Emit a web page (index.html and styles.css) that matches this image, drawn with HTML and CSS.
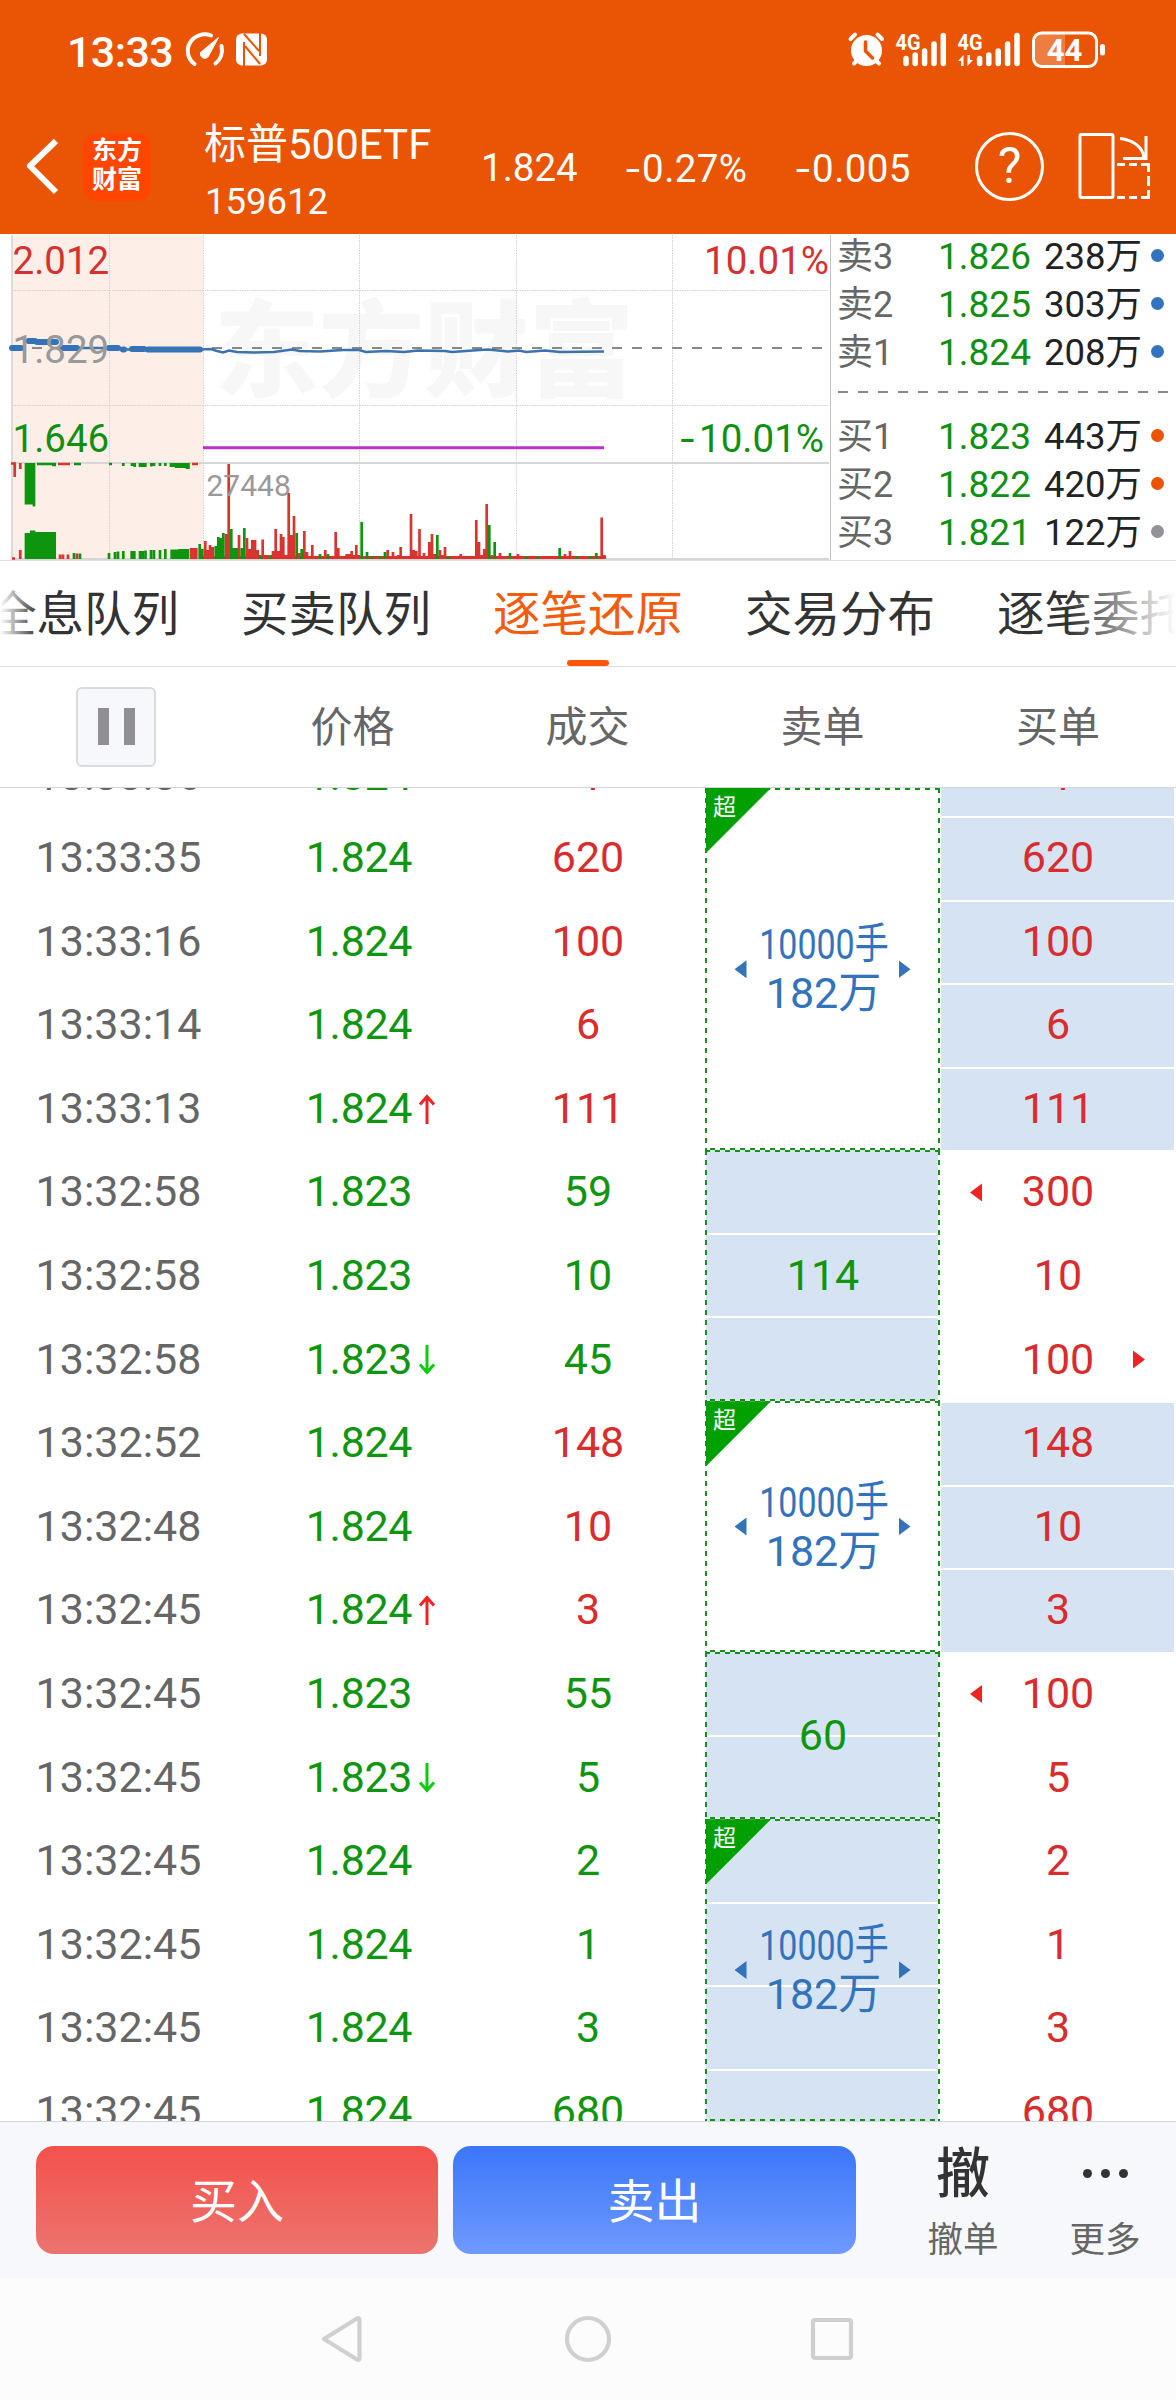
FILE: index.html
```html
<!DOCTYPE html>
<html lang="zh-CN">
<head>
<meta charset="utf-8">
<title>标普500ETF 159612</title>
<link rel="stylesheet" href="styles.css">
</head>
<body>
<header class="top">
  <div class="status">
    <span class="clock">13:33</span>
    <svg class="status-left" width="84" height="36" viewBox="184 31 84 36" fill="none" stroke="#fff" stroke-width="4" stroke-linecap="round">
      <path d="M194.500 64A17 16.500 0 0 1 211 35.500M221.500 46A17 17 0 0 1 215.500 63.500"/>
      <path d="M200.500 52.500L218.500 37.500L208 57A4.500 4.500 0 0 1 200.500 52.500Z" fill="#fff" stroke-width="1"/>
      <rect x="236" y="33.500" width="31" height="32" rx="6" fill="#fff" stroke="none"/>
      <path d="M244 42V66M244 34L259 51M245 46L260 64M260 33V56" stroke="#e95504" stroke-width="2" stroke-linecap="butt"/>
    </svg>
    <svg class="status-right" width="260" height="40" viewBox="847 30 260 40" fill="#fff">
      <circle cx="866.500" cy="50.500" r="15.500"/>
      <path d="M850.500 39L855 34.500M882 39L877.500 34.500M854 63.500L858 59.500M879 63.500L875 59.500" stroke="#fff" stroke-width="4" stroke-linecap="round"/>
      <path d="M865.500 42V51L872.500 58" fill="none" stroke="#e95504" stroke-width="3.500" stroke-linecap="round" stroke-linejoin="round"/>
      <text class="net" x="895.500" y="49.500" textLength="25" lengthAdjust="spacingAndGlyphs">4G</text>
      <text class="net" x="957.500" y="49.500" textLength="25" lengthAdjust="spacingAndGlyphs">4G</text>
      <g stroke="#fff" stroke-width="5.500" stroke-linecap="round">
        <path d="M906 58.500V63.500M915.200 55V63.500M924.600 51V63.500M934 44V63.500M943.300 35.500V63.500"/>
        <path d="M979.600 58.500V63.500M988.800 55V63.500M998.200 51V63.500M1007.600 44V63.500M1017 35.500V63.500"/>
      </g>
      <path d="M958 61L963.500 55V66H961V61ZM973 60L967.500 66V55H970V60Z"/>
      <path d="M1041 33H1065V66H1041A7 7 0 0 1 1034 59V40A7 7 0 0 1 1041 33Z" opacity=".24"/>
      <rect x="1033.500" y="33" width="63" height="33.500" rx="8" fill="none" stroke="#fff" stroke-width="3"/>
      <rect x="1100" y="44" width="5" height="11.500" rx="2.500"/>
      <text class="battery" x="1064.500" y="61" text-anchor="middle">44</text>
    </svg>
  </div>
  <div class="quote">
    <svg class="back" width="36" height="60" viewBox="0 0 36 60" fill="none" stroke="#fff" stroke-width="6" stroke-linejoin="round"><path d="M32 5L6 30L32 56"/></svg>
    <div class="logo"><span>东方</span><span>财富</span></div>
    <div class="name"><span>标普500ETF</span><small>159612</small></div>
    <span class="num last">1.824</span>
    <span class="num pct"><i>-</i>0.27%</span>
    <span class="num diff"><i>-</i>0.005</span>
    <div class="help">?</div>
    <svg class="rotate" width="76" height="70" viewBox="1077 131 76 70" fill="none" stroke="#fff" stroke-width="3">
      <rect x="1080" y="134.500" width="33" height="63" rx="1.500"/>
      <path d="M1120 138.500C1133 140 1143 147 1144 158M1146 136V158.500H1123"/>
      <path d="M1117 164.500H1125M1129 164.500H1137M1141 164.500H1148.500V172M1148.500 176V186M1148.500 190V197.500H1141M1137 197.500H1129M1125 197.500H1117"/>
    </svg>
  </div>
</header>

<section class="market">
  <svg class="chart" width="832" height="326" viewBox="0 234 832 326" fill="none">
    <rect x="12" y="235" width="191" height="324" fill="#fdeee7"/>
    <text class="mark" x="214" y="388">东方财富</text>
    <path d="M109.500 235V559M203.500 235V559M359.500 235V559M516.500 235V559M672.500 235V559M12 290.500H828M12 405.500H828" stroke="#d2d2d2" stroke-dasharray="1.500 1"/>
    <path d="M12 235V560" stroke="#dcdcdc" stroke-width="2"/>
    <path d="M830.500 235V560" stroke="#c4c4c4"/>
    <path d="M12 463H829M12 559H829" stroke="#d6d6d6" stroke-width="2"/>
    <path d="M32 348H822" stroke="#888" stroke-width="2" stroke-dasharray="10 10"/>
    <path d="M12 348H21M28.500 341H35M37 342H56M62 348H77M109 348H118M123 349.500H124M132 349H144M148 349.500H200" stroke="#3273bc" stroke-width="6" stroke-linecap="round"/>
    <path d="M77 348H109M118 348L124 349.500H200L211 349L217 351L223 352.500L229 350.500L237 352L254 352.500L274 352L281 351L292 349.500L300 351L320 351.500L343 350H359L366 352L386 351L404 352L418 350.500L445 351L452 352L480 350L488 349.500L508 351.500L519 350.500L526 352L545 350.500L560 352L604 351.500" stroke="#3b73ad" stroke-width="2.500"/>
    <path d="M203 447.700H604" stroke="#bb32c8" stroke-width="3"/>
    <g stroke-width="2.700">
      <path stroke="#d93430" d="M11 463.500H16M14.700 463V477M20.300 463V469M58 464H70M192 464H198M20.300 559V550M12 558.500H15M60 559V554.500M63 559V554.500M68 559V554.500M77 559V553.500M191 559V548M193.700 559V548M196.300 559V548
      M205.300 559V541M207.800 559V550M210 559V545M212.700 559V547M226 559V534M228.700 559V464M239 559V535M247 559V538M249.700 559V549M252.300 559V540M255 559V540M257.700 559V550M262.700 559V539.500M265.300 559V555M268 559V555M273 559V551M275.700 559V529M278.300 559V551M281 559V534M283.300 559V537M286 559V555M288.700 559V493M291.300 559V535M294 559V516M299.300 559V553M304.300 559V531M307 559V552M312.300 559V545M325.300 559V550M335.700 559V532M338.300 559V548M346.700 559V554M349.300 559V554M351.700 559V551M354.300 559V555M356.300 559V545M359 559V555M387.700 559V550M393 559V552M398.300 559V555M400.700 559V547M411 559V514M413.700 559V550M416.300 559V551M419.500 559V529M424 559V553M429.300 559V542M432 559V534M434.700 559V554M440 559V550M442.700 559V555M445 559V547M460.700 559V554M476.300 559V520M479 559V542M481.700 559V555M484.300 559V549M486.700 559V504M492 559V555M500 559V553M518 559V554M565 559V554M570 559V551M601.700 559V517.500M604.300 559V555"/>
      <path d="M203 557.500H606" stroke="#dd302c" stroke-width="3"/>
      <path stroke="#0f9410" d="M26 463V504.500M28.700 463V504.500M31.300 463V504.500M34 463V506.500M37 464H56M52 465H56M74 464H81M109 464H112M123.300 463V466M132 463V466M134.700 463V467M140 463V467M142.700 463V467M145.300 463V467M151.300 463V466.500M154 463V466M160 463V466M165.300 463V466M171 463V467M173.700 463V467M176.300 463V468M179 463V468M181.700 463V468M184.300 463V468M187 463V469M188.500 463V469
      M26 559V533M28.700 559V533M31.300 559V530.500M34 559V530.500M36.700 559V532M39.300 559V532M42 559V532M44.700 559V532M47.300 559V532M50 559V532M52.700 559V532M54.700 559V532M74 559V553M80 559V553.500M109 559V553M115 559V552M118 559V551.500M123.300 559V551M131.700 559V551M134.300 559V551M140 559V551M142.700 559V551M145.500 559V550.500M151 559V550M154 559V550M160 559V550M165.300 559V549M171.700 559V549.500M174.300 559V549.500M177 559V549.500M179.700 559V549M182.300 559V549M185 559V549M187.700 559V549M199.700 559V544M202.300 559V549M215.700 559V546M218.300 559V537M220.700 559V538M223.300 559V533M231.300 559V529M234 559V548M236.700 559V548M241.700 559V548M244.300 559V528M260.300 559V555M270.700 559V555M296.700 559V533M301.700 559V549M320 559V554M328 559V554M361.700 559V522M367 559V552M385 559V552M437.300 559V535M489.300 559V525M494.700 559V542M510 559V553M559.700 559V548M596.300 559V553M372 559V556M380 559V556M448 559V556M526 559V556M538 559V556M577 559V556M590 559V556"/>
    </g>
    <text class="tick up" x="12.500" y="274">2.012</text>
    <text class="tick mid" x="12.500" y="362.500">1.829</text>
    <text class="tick down" x="12.500" y="451.700">1.646</text>
    <text class="tick up" x="829" y="274" text-anchor="end">10.01%</text>
    <text class="tick down" x="829" y="451.700" text-anchor="end"><tspan class="minus" dx="-5">-</tspan><tspan dx="3">10.01%</tspan></text>
    <text class="peak" x="206.500" y="495.700">27448</text>
  </svg>
  <div class="depth">
    <div class="level"><span>卖3</span><b>1.826</b><em>238万</em><i class="dot blue"></i></div>
    <div class="level"><span>卖2</span><b>1.825</b><em>303万</em><i class="dot blue"></i></div>
    <div class="level"><span>卖1</span><b>1.824</b><em>208万</em><i class="dot blue"></i></div>
    <div class="split"></div>
    <div class="level"><span>买1</span><b>1.823</b><em>443万</em><i class="dot orange"></i></div>
    <div class="level"><span>买2</span><b>1.822</b><em>420万</em><i class="dot orange"></i></div>
    <div class="level"><span>买3</span><b>1.821</b><em>122万</em><i class="dot gray"></i></div>
  </div>
</section>

<nav class="tabs">
  <span>全息队列</span><span>买卖队列</span><span class="active">逐笔还原</span><span>交易分布</span><span>逐笔委托</span>
</nav>

<div class="heads">
  <div><span class="pause"><i></i><i></i></span></div>
  <div>价格</div><div>成交</div><div>卖单</div><div>买单</div>
</div>

<main class="book">
  <div class="col time">
    <p>13:33:36</p><p>13:33:35</p><p>13:33:16</p><p>13:33:14</p><p>13:33:13</p><p>13:32:58</p><p>13:32:58</p><p>13:32:58</p><p>13:32:52</p><p>13:32:48</p><p>13:32:45</p><p>13:32:45</p><p>13:32:45</p><p>13:32:45</p><p>13:32:45</p><p>13:32:45</p><p>13:32:45</p>
  </div>
  <div class="col price">
    <p>1.824</p><p>1.824</p><p>1.824</p><p>1.824</p>
    <p>1.824<svg class="move" width="18" height="30" viewBox="0 0 18 30"><path d="M9 30V3M2 10.500L9 2.500L16 10.500" stroke="#ee2424"/></svg></p>
    <p>1.823</p><p>1.823</p>
    <p>1.823<svg class="move" width="18" height="30" viewBox="0 0 18 30"><path d="M9 0V27M2 19.500L9 27.500L16 19.500" stroke="#0ccc0c"/></svg></p>
    <p>1.824</p><p>1.824</p>
    <p>1.824<svg class="move" width="18" height="30" viewBox="0 0 18 30"><path d="M9 30V3M2 10.500L9 2.500L16 10.500" stroke="#ee2424"/></svg></p>
    <p>1.823</p>
    <p>1.823<svg class="move" width="18" height="30" viewBox="0 0 18 30"><path d="M9 0V27M2 19.500L9 27.500L16 19.500" stroke="#0ccc0c"/></svg></p>
    <p>1.824</p><p>1.824</p><p>1.824</p><p>1.824</p>
  </div>
  <div class="col deal">
    <p class="up">4</p><p class="up">620</p><p class="up">100</p><p class="up">6</p><p class="up">111</p><p>59</p><p>10</p><p>45</p><p class="up">148</p><p class="up">10</p><p class="up">3</p><p>55</p><p>5</p><p>2</p><p>1</p><p>3</p><p>680</p>
  </div>
  <div class="sells">
    <div class="order first big"><span class="badge">超</span><i class="tri left"></i><div><span class="lots">10000手</span><span>182万</span></div><i class="tri right"></i></div>
    <div class="order rows3 shade">114</div>
    <div class="order rows3 big"><span class="badge">超</span><i class="tri left"></i><div><span class="lots">10000手</span><span>182万</span></div><i class="tri right"></i></div>
    <div class="order rows2 shade">60</div>
    <div class="order rest big shade"><span class="badge">超</span><i class="tri left"></i><div><span class="lots">10000手</span><span>182万</span></div><i class="tri right"></i></div>
  </div>
  <div class="col buys">
    <p class="fill">4</p><p class="fill">620</p><p class="fill">100</p><p class="fill">6</p><p class="fill">111</p>
    <p><i class="tri left"></i>300</p><p>10</p><p>100<i class="tri right"></i></p>
    <p class="fill">148</p><p class="fill">10</p><p class="fill">3</p>
    <p><i class="tri left"></i>100</p><p>5</p><p>2</p><p>1</p><p>3</p><p>680</p>
  </div>
</main>

<footer class="trade">
  <button class="buy">买入</button>
  <button class="sell">卖出</button>
  <div class="tool cancel"><b>撤</b><span>撤单</span></div>
  <div class="tool more"><b><i></i><i></i><i></i></b><span>更多</span></div>
</footer>
<div class="sysnav">
  <svg width="536" height="50" viewBox="320 2314 536 50" fill="none" stroke="#d0d0d0" stroke-width="4.200" stroke-linejoin="round">
    <path d="M324 2339L357 2318.500Q359.500 2317.500 359.500 2320V2358Q359.500 2360.500 357 2359.500Z"/>
    <circle cx="588" cy="2339" r="21"/>
    <rect x="813" y="2320" width="38" height="38" rx="2"/>
  </svg>
</div>
</body>
</html>
```
FILE: styles.css
```css
* { box-sizing: border-box; }
body {
  margin: 0;
  width: 1176px;
  background: #fff;
  font-family: Roboto, "Noto Sans CJK SC", sans-serif;
  font-weight: 400;
  color: #222;
}
p { margin: 0; }
i, em { font-style: normal; }
svg { display: block; flex: none; }

.top { height: 234px; background: #e95504; color: #fff; }
.status { height: 100px; display: flex; align-items: flex-start; padding: 31px 69px 0 67px; }
.clock { font-size: 43px; line-height: 42px; font-weight: 500; width: 117px; letter-spacing: -0.6px; white-space: nowrap; }
.status-left { margin-top: 0; }
.status-right { margin: -1px 0 0 auto; }
.net { font-size: 22px; font-weight: 700; font-family: Roboto, sans-serif; }
.battery { font-size: 31px; font-weight: 700; font-family: Roboto, sans-serif; }

.quote { height: 134px; display: flex; align-items: flex-start; padding-left: 24px; }
.back { margin-top: 36px; }
.logo {
  width: 68px; height: 68px; margin: 33px 0 0 23px; padding-top: 3px;
  border-radius: 14px; background: #ff4600; text-align: center;
  font-size: 25px; line-height: 29px; font-weight: 700;
}
.logo span { display: block; }
.name { width: 276px; margin: 17px 0 0 53px; font-size: 42px; }
.name span, .name small { display: block; line-height: 56px; white-space: nowrap; }
.name small { font-size: 36.500px; padding: 1px 0 0 1px; }
.num { font-size: 38.500px; line-height: 50px; margin-top: 43px; white-space: nowrap; }
.num i, .minus { font-family: Inter, sans-serif; }
.last { width: 144px; padding-left: 1px; }
.pct { width: 170px; letter-spacing: 0.4px; }
.diff { width: 181px; letter-spacing: 0.4px; }
.help {
  width: 69px; height: 69px; margin-top: 32px; border: 3px solid #fff; border-radius: 50%;
  font-size: 50px; line-height: 63px; text-align: center;
}
.rotate { margin: 31px 0 0 33px; }

.market { height: 327px; display: flex; border-bottom: 1px solid #dedede; }
.chart { width: 832px; }
.mark { font: 900 105px "Noto Sans CJK SC", sans-serif; fill: #f7f7f7; }
.tick { font-size: 38.500px; }
.peak { font-size: 30px; fill: #999; }
.tick.up { fill: #d63030; }
.tick.mid { fill: #999; }
.tick.down { fill: #109010; }
.depth { flex: 1; padding: 0 0 0 5px; }
.level { height: 48px; display: flex; align-items: center; font-size: 37px; line-height: 44px; white-space: nowrap; }
.level:nth-child(-n+3) { padding-bottom: 2px; }
.level:nth-child(n+5) { padding-top: 1px; }
.level span { width: 101px; color: #666; font-size: 36px; }
.level b { width: 106px; font-weight: 400; color: #109010; }
.level em { width: 107px; font-size: 36.500px; }
.dot { width: 13px; height: 13px; border-radius: 50%; margin-top: -3px; }
.blue { background: #3273bc; }
.orange { background: #e95504; }
.gray { background: #929297; }
.split {
  width: 331px; height: 2px; margin: 13px 0 19px 1px;
  background: repeating-linear-gradient(90deg, #888 0 10px, transparent 10px 20px);
}

.tabs {
  position: relative; height: 106px; display: flex; gap: 60px;
  border-bottom: 1px solid #e2e2e2; overflow: hidden;
  font-size: 47.500px; line-height: 108px; color: #333; white-space: nowrap;
}
.tabs span { flex: none; width: 192px; position: relative; }
.tabs span:first-child { margin-left: -11px; }
.tabs .active { color: #f25c0c; }
.active::after {
  content: ""; position: absolute; left: 74px; bottom: 0; width: 42px; height: 6px;
  border-radius: 3px; background: #fc560a;
}
.tabs::before, .tabs::after { content: ""; position: absolute; top: 0; bottom: 0; z-index: 1; }
.tabs::before { left: 0; width: 38px; background: linear-gradient(90deg, #fff, rgba(255,255,255,0)); }
.tabs::after { right: 0; width: 108px; background: linear-gradient(270deg, #fff, rgba(255,255,255,0)); }

.heads, .book { display: grid; grid-template-columns: 235px 235px 235px 235px 236px; }
.heads {
  height: 121px; align-items: center; text-align: center; border-bottom: 1px solid #d4d6d8;
  font-size: 42px; line-height: 60px; color: #666; padding-top: 1px;
}
.pause {
  width: 80px; height: 80px; margin: -2px 0 0 76px; display: flex; align-items: center; justify-content: center; gap: 15px;
  border: 2px solid #d8dbe0; border-radius: 6px; background: #f6f8fb;
}
.pause i { width: 11px; height: 37px; background: #8f8f94; }

.book { height: 1333px; overflow: hidden; font-size: 43px; line-height: 83.600px; text-align: center; }
.col { margin-top: -55.600px; height: 1421.200px; }
.col p { height: 83.600px; position: relative; }
.col p:first-child { line-height: 86px; }
.time { color: #666; padding-left: 2px; }
.price { color: #109510; padding-left: 13px; letter-spacing: -0.3px; }
.deal { color: #109510; padding-left: 1px; }
.deal .up { color: #d92c2c; }
.move { position: absolute; left: 170px; top: 27px; fill: none; stroke-width: 3; }
.sells { display: flex; flex-direction: column; }
.order {
  --g: #159018;
  position: relative; flex: none; display: flex; align-items: center; justify-content: center;
  color: #109510; line-height: 49px; padding-left: 1px;
  background-repeat: no-repeat;
  background-image:
    repeating-linear-gradient(90deg, var(--g) 0 5px, transparent 5px 10px),
    repeating-linear-gradient(90deg, var(--g) 0 5px, transparent 5px 10px),
    repeating-linear-gradient(180deg, var(--g) 0 5px, transparent 5px 10px),
    repeating-linear-gradient(180deg, var(--g) 0 5px, transparent 5px 10px);
  background-size: 100% 2px, 100% 2px, 2px 100%, 2px 100%;
  background-position: 0 0, 5px 100%, 0 0, 100% 0;
}
.shade {
  background-image:
    repeating-linear-gradient(90deg, var(--g) 0 5px, transparent 5px 10px),
    repeating-linear-gradient(90deg, var(--g) 0 5px, transparent 5px 10px),
    repeating-linear-gradient(180deg, var(--g) 0 5px, transparent 5px 10px),
    repeating-linear-gradient(180deg, var(--g) 0 5px, transparent 5px 10px),
    repeating-linear-gradient(180deg, #d6e3f3 0 82.600px, #fff 82.600px 84.600px, #d6e3f3 84.600px 166.200px, #fff 166.200px 168.200px, #d6e3f3 168.200px 249.800px, #fff 249.800px 251.800px, #d6e3f3 251.800px 320px);
  background-size: 100% 2px, 100% 2px, 2px 100%, 2px 100%, 232px 100%;
  background-position: 0 0, 5px 100%, 0 0, 100% 0, 1px 0;
}
.first { height: 362.400px; }
.rows3 { height: 250.800px; }
.rows2 { height: 167.200px; }
.rest { height: 301.800px; }
.big { color: #3273bc; padding-left: 0; }
.big div { display: flex; flex-direction: column; align-items: center; width: 152px; padding-left: 2px; }
.lots { transform: scaleX(.79); white-space: nowrap; }
.tri { width: 12px; height: 18px; background: #3273bc; }
.left { clip-path: polygon(100% 0, 100% 100%, 0 50%); }
.right { clip-path: polygon(0 0, 100% 50%, 0 100%); }
.badge {
  position: absolute; left: 1px; top: 0; width: 65px; height: 65px; padding-left: 7px;
  background: #00a000; clip-path: polygon(0 0, 100% 0, 0 100%);
  color: #fff; font-size: 23px; line-height: 40px; text-align: left;
}
.buys { color: #d92c2c; padding: 0 2px 0 1px; }
.buys p { padding-left: 1px; }
.buys .fill { background: #d6e3f3; box-shadow: inset 0 2px #fff; }
.buys .tri { position: absolute; top: 33px; background: #ee2424; }
.buys .left { left: 29px; }
.buys .right { left: 192px; }

.trade {
  height: 157px; display: flex; align-items: flex-start; padding: 24px 0 0 36px;
  border-top: 1px solid #d3d6da; background: #f6f8fb;
}
.trade button {
  width: 402px; height: 108px; margin: 0 15px 0 0; padding: 0 0 6px; border: 0; border-radius: 18px;
  font: inherit; font-size: 47px; color: #fff;
}
.trade .sell { width: 403px; }
.buy { background: linear-gradient(#f4514c, #ec746e); }
.sell { background: linear-gradient(#3b76f9, #6f9aff); }
.tool { text-align: center; width: 142px; font-size: 35.500px; line-height: 50px; color: #666; }
.tool b { height: 54px; line-height: 56px; font-size: 54px; font-weight: 500; color: #333; display: flex; justify-content: center; align-items: center; gap: 9px; }
.cancel b { padding-top: 3px; }
.tool b i { width: 9px; height: 9px; border-radius: 50%; background: #333; }
.tool span { display: block; margin-top: 15px; }
.cancel { margin-left: 21px; }
.sysnav { height: 122px; padding: 36px 0 0 320px; background: #fcfcfc; }
```
